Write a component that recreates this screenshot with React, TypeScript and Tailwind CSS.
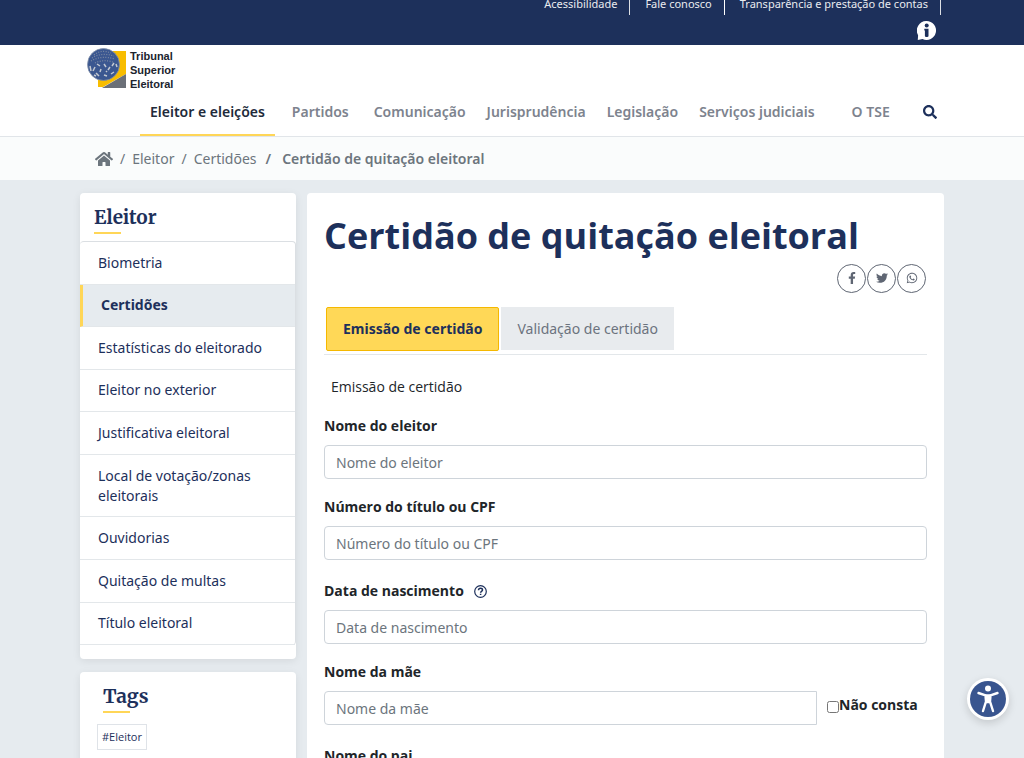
import React from "react";
import { FaFacebookF, FaHome, FaSearch, FaTwitter, FaWhatsapp } from "react-icons/fa";

const sideLinks = [
  "Biometria",
  "Certidões",
  "Estatísticas do eleitorado",
  "Eleitor no exterior",
  "Justificativa eleitoral",
  "Local de votação/zonas eleitorais",
  "Ouvidorias",
  "Quitação de multas",
  "Título eleitoral",
];

const navLinks = [
  { label: "Partidos", className: "ml-1" },
  { label: "Comunicação", className: "ml-1" },
  { label: "Jurisprudência", className: "" },
  { label: "Legislação", className: "" },
  { label: "Serviços judiciais", className: "" },
  { label: "O TSE", className: "ml-4" },
];

const shareLinks = [
  { label: "Facebook", Icon: FaFacebookF },
  { label: "Twitter", Icon: FaTwitter },
  { label: "WhatsApp", Icon: FaWhatsapp },
];

function Logo() {
  return (
    <a href="#" className="flex h-10 w-fit items-start gap-[3px]">
      <svg viewBox="0 0 40 40" className="size-10" aria-hidden="true">
        <path d="M24 3H39V26L16 39H11V32Z" fill="#f8bd00" />
        <path d="M39 26V40H15Z" fill="#6b7078" />
        <circle cx="16.500" cy="16.500" r="16" fill="#3b5790" stroke="#8390aa" strokeWidth="0.8" />
        <path d="M7 7Q14 1 24 5M5 10Q14 4 27 8M4 13Q14 7 28 11M8 15Q16 11 26 14" stroke="#7d8aa3" strokeWidth="1.200" strokeDasharray="1 1.500" fill="none" />
        <path d="M3 18l1 5M8 19l-2 4M10 16l3 2M9 25l3 3M14 21l-1 3M17 16l2 3M21 22l2-3M25 18l2-3M24 26l3-2M17 27l3 1M29 16l1 3M7 27l2 1M19 23l1 1" stroke="#c3c8d0" strokeWidth="1.500" fill="none" />
      </svg>
      <span className="w-12 pt-px font-['Liberation_Sans',sans-serif] text-[11px] font-bold leading-[14px] text-[#20242e]">
        Tribunal Superior Eleitoral
      </span>
    </a>
  );
}

function Field({ id, label, children }: { id: string; label: string; children?: React.ReactNode }) {
  return (
    <div>
      <div className="flex items-center gap-[10px]">
        <label htmlFor={id} className="font-['Open_Sans',sans-serif] text-sm font-bold leading-5 text-[#212529]">
          {label}
        </label>
        {children}
      </div>
      <input
        id={id}
        type="text"
        placeholder={label}
        className="mt-[9px] block h-[34px] w-full rounded border border-[#ced4da] bg-white px-[11px] text-sm text-[#495057] placeholder:text-[#6c757d]"
      />
    </div>
  );
}

function ParentField({ id, label }: { id: string; label: string }) {
  return (
    <div>
      <label htmlFor={id} className="block font-['Open_Sans',sans-serif] text-sm font-bold leading-5 text-[#212529]">
        {label}
      </label>
      <div className="mt-[9px] flex items-center">
        <input
          id={id}
          type="text"
          placeholder={label}
          className="h-[34px] min-w-0 flex-1 rounded-l border border-[#ced4da] bg-white px-[11px] text-sm text-[#495057] placeholder:text-[#6c757d]"
        />
        <label className="flex w-[110px] items-center whitespace-nowrap pb-[6px] pl-[10px] font-['Open_Sans',sans-serif] text-sm font-bold text-[#212529]">
          <input type="checkbox" className="mt-1 size-3 shrink-0" />
          Não consta
        </label>
      </div>
    </div>
  );
}

export default function App() {
  return (
    <div className="h-screen overflow-hidden bg-[#e6ebef] font-['Noto_Sans',sans-serif] text-[#212529]">
      <div className="bg-[#1d305b]">
        <div className="mx-auto h-[45px] max-w-[864px]">
          <ul className="flex h-[15px] justify-end pr-[3px] text-[11px] leading-[8px] text-[#e9ebef]">
            <li className="border-r border-[#dcdfe5] pl-[15px] pr-3">
              <a href="#">Acessibilidade</a>
            </li>
            <li className="border-r border-white pl-[15px] pr-3">
              <a href="#">Fale conosco</a>
            </li>
            <li className="border-r border-[#dcdfe5] pl-[15px] pr-3">
              <a href="#">Transparência e prestação de contas</a>
            </li>
          </ul>
          <div className="flex justify-end pr-2 pt-[6px]">
            <a href="#" aria-label="Acesso à informação">
              <svg viewBox="0 0 19 19" className="size-[19px]" aria-hidden="true">
                <path d="M9.500 0a9.500 9.500 0 1 1-4 18.100L.8 19l.3-4.800A9.500 9.500 0 0 1 9.500 0Z" fill="#fff" />
                <circle cx="9.700" cy="4.500" r="2" fill="#1d305b" />
                <path d="M7.300 7.800h4.200V15c0 1.400-3.600 1.400-3.600 0V9.400h-.6Z" fill="#1d305b" />
              </svg>
            </a>
          </div>
        </div>
      </div>

      <header className="border-b border-[#e1e5e9] bg-white">
        <div className="mx-auto max-w-[864px]">
          <div className="pl-[7px] pt-[3px]">
            <Logo />
          </div>
          <nav className="flex gap-[5px] whitespace-nowrap pl-[60px] text-sm font-semibold leading-[48px] text-[#7d838e]">
            <a href="#" className="h-12 border-b-2 border-[#ffd657] px-[10px] text-[#212a3a]">
              Eleitor e eleições
            </a>
            {navLinks.map((n) => (
              <a key={n.label} href="#" className={"px-2 " + n.className}>
                {n.label}
              </a>
            ))}
            <button aria-label="Buscar" className="ml-3 px-2 text-[#1d305b]">
              <FaSearch className="size-[14px]" />
            </button>
          </nav>
        </div>
      </header>

      <div className="bg-[#fafcfc]">
        <ol className="mx-auto flex h-[43px] max-w-[864px] items-center gap-[7px] px-[15px] text-sm text-[#6c757d]">
          <li>
            <a href="#" aria-label="Início">
              <FaHome className="size-[18px]" />
            </a>
          </li>
          <li>/</li>
          <li>
            <a href="#">Eleitor</a>
          </li>
          <li>/</li>
          <li>
            <a href="#">Certidões</a>
          </li>
          <li className="pl-[2px] font-semibold">/</li>
          <li className="pl-1 font-semibold">Certidão de quitação eleitoral</li>
        </ol>
      </div>

      <div className="mx-auto grid max-w-[864px] grid-cols-[25%_1fr] gap-x-[11px] pt-[13px]">
        <aside className="flex flex-col gap-[13px]">
          <section className="rounded bg-white pb-[14px] shadow-[0_2px_8px_rgba(0,0,0,0.08)]">
            <div className="h-12 px-[14px] pt-3">
              <h2 className="font-['Merriweather','Noto_Serif','DejaVu_Serif',serif] text-[19px] font-bold leading-6 text-[#1d305b]">
                Eleitor
              </h2>
              <div className="mt-[3px] h-[2px] w-[27px] bg-[#ffd657]" />
            </div>
            <ul className="flex min-h-[404px] flex-col rounded border-r border-t border-[#dbdfe3] text-sm leading-5 text-[#1d305b]">
              {sideLinks.map((s) => {
                const active = s === "Certidões";
                return (
                  <li
                    key={s}
                    className={
                      "flex grow items-center border-b border-[#e3e7ea] " +
                      (active ? "border-l-[3px] border-l-[#ffd657] bg-[#e6ebef]" : "")
                    }
                  >
                    <a href="#" className={"block w-full px-[18px] py-[10px] " + (active ? "font-bold" : "")}>
                      {s}
                    </a>
                  </li>
                );
              })}
            </ul>
          </section>
          <section className="rounded bg-white px-[17px] pb-5 pt-3 shadow-[0_2px_8px_rgba(0,0,0,0.08)]">
            <div className="pl-[6px]">
              <h2 className="font-['Merriweather','Noto_Serif','DejaVu_Serif',serif] text-[19px] font-bold leading-6 text-[#1d305b]">
                Tags
              </h2>
              <div className="mt-[3px] h-[2px] w-[27px] bg-[#ffd657]" />
            </div>
            <a
              href="#"
              className="mt-[11px] inline-block border border-[#dfe3e8] px-1 font-['Open_Sans',sans-serif] text-[11px] leading-6 text-[#1d305b]"
            >
              #Eleitor
            </a>
          </section>
        </aside>

        <main className="rounded bg-white px-[17px] pt-5">
          <h1 className="font-['Open_Sans',sans-serif] text-4xl font-bold leading-[46px] text-[#1d305b]">
            Certidão de quitação eleitoral
          </h1>
          <div className="mt-[5px] flex justify-end gap-px pr-px">
            {shareLinks.map(({ label, Icon }) => (
              <a
                key={label}
                href="#"
                aria-label={label}
                className="flex size-[29px] items-center justify-center rounded-full border border-[#5f6673] pb-[2px] text-[#5f6673]"
              >
                <Icon className="size-3" />
              </a>
            ))}
          </div>
          <div className="mt-[14px] flex gap-[2px] border-b border-[#e3e7ea] pb-[3px] pl-[2px] text-sm">
            <button className="h-11 rounded-xs border border-[#f5b800] bg-[#ffd857] px-4 font-bold text-[#1d305b]">
              Emissão de certidão
            </button>
            <button className="h-[43px] bg-[#e8ebee] px-4 text-[#6c737e]">Validação de certidão</button>
          </div>
          <form className="pt-[22px]">
            <p className="pl-[7px] font-['Open_Sans',sans-serif] text-sm leading-5">Emissão de certidão</p>
            <div className="flex flex-col gap-[18px] pt-[19px]">
              <Field id="nome" label="Nome do eleitor" />
              <Field id="titulo" label="Número do título ou CPF" />
              <div className="pt-[3px]">
                <Field id="nascimento" label="Data de nascimento">
                  <button type="button" aria-label="Ajuda">
                    <svg viewBox="0 0 13 13" className="size-[13px] text-[#1d305b]" fill="none" stroke="currentColor" aria-hidden="true">
                      <circle cx="6.500" cy="6.500" r="5.800" strokeWidth="1.200" />
                      <path d="M4.500 5.200c.1-1.300 1-1.900 2-1.900 1.200 0 2 .7 2 1.700 0 1.400-1.900 1.400-1.900 2.700M6.600 8.700v1.300" strokeWidth="1.500" />
                    </svg>
                  </button>
                </Field>
              </div>
              <ParentField id="mae" label="Nome da mãe" />
              <div className="pt-[3px]">
                <ParentField id="pai" label="Nome do pai" />
              </div>
            </div>
          </form>
        </main>
      </div>

      <button
        aria-label="Acessibilidade"
        className="fixed bottom-[38px] right-[15px] rounded-full bg-white p-[3px] shadow-[0_3px_8px_rgba(0,0,0,0.15)]"
      >
        <svg viewBox="0 0 36 36" className="size-9" aria-hidden="true">
          <circle cx="18" cy="18" r="18" fill="#39558f" />
          <circle cx="18" cy="7.500" r="3" fill="#fff" />
          <path
            d="M8.500 12 15.500 14.300 16 20.500 13 30M27.500 12 20.500 14.300 20 20.500 23 30"
            fill="none"
            stroke="#fff"
            strokeWidth="2.400"
            strokeLinecap="round"
            strokeLinejoin="round"
          />
          <path d="M15 13.200h6l-.4 9h-5.200Z" fill="#fff" />
        </svg>
      </button>
    </div>
  );
}
